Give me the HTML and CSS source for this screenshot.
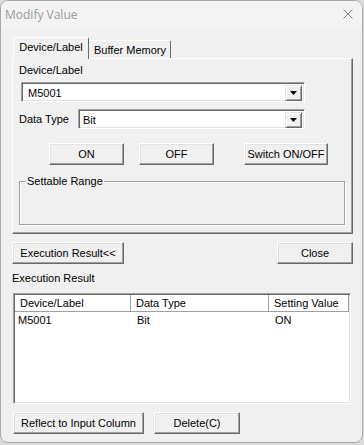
FILE: index.html
```html
<!DOCTYPE html>
<html>
<head>
    <meta charset="utf-8" />
    <title>Modify Value</title>
    <link rel="stylesheet" href="styles.css">
</head>
<body>
<div class="window">
    <div class="titlebar">
        <span class="title">Modify Value</span>
        <svg class="close" width="10" height="10" viewBox="0 0 10 10">
            <path d="M0.5 0.5 L9.5 9.5 M9.5 0.5 L0.5 9.5" stroke="#8a8a8a" stroke-width="1" fill="none" />
        </svg>
    </div>
    <div class="client">
        <div class="tabs">
            <div class="tab selected">Device/Label</div>
            <div class="tab">Buffer Memory</div>
        </div>
        <div class="panel">
            <div class="label">Device/Label</div>
            <div class="combo wide">
                <span class="combo-text">M5001</span>
                <span class="drop"><svg width="7" height="4" viewBox="0 0 7 4"><polygon points="0,0 7,0 3.5,4" fill="#000" /></svg></span>
            </div>
            <div class="type-row">
                <span class="type-label">Data Type</span>
                <div class="combo narrow">
                    <span class="combo-text tight">Bit</span>
                    <span class="drop"><svg width="7" height="4" viewBox="0 0 7 4"><polygon points="0,0 7,0 3.5,4" fill="#000" /></svg></span>
                </div>
            </div>
            <div class="btn-row">
                <button class="btn w75">ON</button>
                <button class="btn w75 gap15">OFF</button>
                <button class="btn w84 gap30">Switch ON/OFF</button>
            </div>
            <div class="group">
                <span class="group-title">Settable Range</span>
            </div>
        </div>

        <div class="action-row">
            <button class="btn w112">Execution Result&lt;&lt;</button>
            <button class="btn w76">Close</button>
        </div>

        <div class="label result-label">Execution Result</div>

        <div class="list">
            <div class="list-head">
                <div class="hcell">Device/Label</div>
                <div class="hcell">Data Type</div>
                <div class="hcell">Setting Value</div>
            </div>
            <div class="list-row">
                <div class="cell first">M5001</div>
                <div class="cell">Bit</div>
                <div class="cell">ON</div>
            </div>
        </div>

        <div class="bottom-row">
            <button class="btn w131">Reflect to Input Column</button>
            <button class="btn w86 gap10">Delete(C)</button>
        </div>
    </div>
</div>
</body>
</html>
```

FILE: styles.css
```css
body {
    margin: 0;
    background: #dcdcdc;
    font: 11px "Liberation Sans", Arial, sans-serif;
    color: #000;
}

.window {
    width: 363px;
    height: 443px;
    box-sizing: border-box;
    border: 1px solid #a8a8a8;
    border-radius: 8px;
    background: #f0f0f0;
    overflow: hidden;
}

.titlebar {
    height: 26px;
    background: #f3f3f3;
    display: flex;
    align-items: center;
    justify-content: space-between;
    padding: 0 9px 0 4px;
}

    .titlebar .title {
        font: 12px "Open Sans", "Noto Sans", sans-serif;
        color: #9a9a9a;
    }

.client {
    padding: 10px 0 0 11px;
}

/* tabs */
.tabs {
    display: flex;
    align-items: flex-end;
    height: 21px;
    padding-left: 1px;
}

.tab {
    box-sizing: border-box;
    width: 82px;
    height: 18px;
    border: 1px solid;
    border-color: #fff #696969 transparent transparent;
    border-bottom: none;
    border-radius: 2px 2px 0 0;
    display: flex;
    align-items: center;
    justify-content: center;
    padding-top: 1px;
}

    .tab.selected {
        width: 76px;
        height: 22px;
        margin-bottom: -1px;
        border-left-color: #fff;
        background: #f0f0f0;
        position: relative;
        z-index: 1;
        padding: 0 0 3px 0;
    }

.panel {
    box-sizing: border-box;
    width: 341px;
    height: 176px;
    border: 1px solid;
    border-color: #fff #696969 #696969 #fff;
    box-shadow: inset -1px -1px #a0a0a0;
    padding: 5px 0 0 6px;
}

.label {
    line-height: 13px;
}

/* combo boxes */
.combo {
    display: flex;
    box-sizing: border-box;
    height: 20px;
    background: #fff;
    border: 1px solid;
    border-color: #a0a0a0 #fff #fff #a0a0a0;
    box-shadow: inset 1px 1px #696969, inset -1px -1px #e3e3e3;
    padding: 2px;
}

    .combo.wide {
        width: 284px;
        margin: 5px 0 0 2px;
    }

    .combo.narrow {
        width: 227px;
    }

.combo-text {
    flex: 1;
    line-height: 16px;
    padding-left: 4px;
}

    .combo-text.tight {
        padding-left: 2px;
    }

.drop {
    box-sizing: border-box;
    width: 17px;
    height: 16px;
    background: #f0f0f0;
    border: 1px solid;
    border-color: #e3e3e3 #696969 #696969 #e3e3e3;
    box-shadow: inset 1px 1px #fff, inset -1px -1px #a0a0a0;
    display: flex;
    align-items: center;
    justify-content: center;
}

.type-row {
    display: flex;
    align-items: center;
    margin-top: 7px;
}

.type-label {
    width: 59px;
}

/* buttons */
.btn {
    box-sizing: border-box;
    height: 22px;
    padding: 0;
    font: inherit;
    color: #000;
    background: #f0f0f0;
    border: 1px solid;
    border-color: #fff #696969 #696969 #fff;
    box-shadow: inset -1px -1px #a0a0a0, inset 1px 1px #e3e3e3;
}

.w75 { width: 75px; }
.w76 { width: 76px; }
.w84 { width: 84px; }
.w86 { width: 86px; }
.w112 { width: 112px; }
.w131 { width: 131px; }
.gap10 { margin-left: 10px; }
.gap15 { margin-left: 15px; }
.gap30 { margin-left: 30px; }

.btn-row {
    display: flex;
    margin: 14px 0 0 30px;
}

/* group box */
.group {
    box-sizing: border-box;
    width: 326px;
    height: 44px;
    margin-top: 16px;
    border: 1px solid #a0a0a0;
    box-shadow: inset 1px 1px #fff, 1px 1px #fff;
    position: relative;
}

    .group .group-title {
        position: absolute;
        top: -7px;
        left: 6px;
        padding: 0 1px;
        line-height: 13px;
        background: #f0f0f0;
    }

.action-row {
    display: flex;
    justify-content: space-between;
    width: 341px;
    margin-top: 8px;
}

.result-label {
    margin-top: 8px;
}

/* list view */
.list {
    box-sizing: border-box;
    width: 338px;
    height: 111px;
    margin: 8px 0 0 1px;
    background: #fff;
    border: 1px solid;
    border-color: #a0a0a0 #fff #fff #a0a0a0;
    box-shadow: inset 1px 1px #696969, inset -1px -1px #e3e3e3;
    padding: 1px;
}

.list-head,
.list-row {
    display: grid;
    grid-template-columns: 116px 138px 80px;
}

.hcell {
    height: 17px;
    line-height: 16px;
    padding-left: 5px;
    background: #fff;
    box-shadow: inset -1px -1px #a0a0a0, inset 1px 0 #fff;
}

.cell {
    line-height: 17px;
    padding-left: 6px;
}

    .cell.first {
        padding-left: 3px;
    }

.bottom-row {
    display: flex;
    margin: 8px 0 0 1px;
}
```
